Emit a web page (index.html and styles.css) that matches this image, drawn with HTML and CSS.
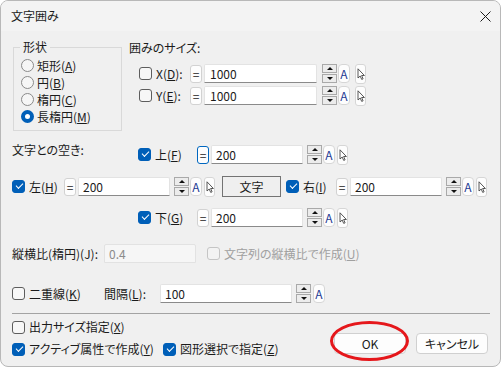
FILE: index.html
```html
<!DOCTYPE html>
<html lang="ja">
<head>
  <meta charset="UTF-8" />
  <title>文字囲み</title>
  <link rel="stylesheet" href="styles.css">
</head>
<body>
  <div class="win">
    <div class="titlebar">
      <span class="ttl">文字囲み</span>
      <svg class="close" width="11" height="11" viewBox="0 0 11 11"><path d="M0.5 0.5l10 10M10.5 0.5l-10 10" stroke="#1b1b1b" stroke-width="1"/></svg>
    </div>

    <div class="body">
      <div class="sec1">
        <fieldset class="shape">
          <legend>形状</legend>
          <div class="radio"><span class="rd"></span>矩形(<u>A</u>)</div>
          <div class="radio"><span class="rd"></span>円(<u>B</u>)</div>
          <div class="radio"><span class="rd"></span>楕円(<u>C</u>)</div>
          <div class="radio"><span class="rd on"></span>長楕円(<u>M</u>)</div>
        </fieldset>
        <div class="size">
          <div class="lbl">囲みのサイズ:</div>
          <div class="row wide r-x">
            <div class="chk c-xy"><span class="cb"></span>X(<u>D</u>):</div>
            <button class="eq">=</button>
            <input class="inp i-xy" type="text" value="1000">
            <div class="spin"><span class="up"></span><span class="dn"></span></div>
            <button class="abtn">A</button>
            <button class="cur"><svg width="8" height="12" viewBox="0 0 8 12"><path d="M1 0.8v9.2l2.2-2 1.5 3.4 1.4-0.6-1.5-3.3h2.8z" fill="#fff" stroke="#444" stroke-width="0.9"/></svg></button>
          </div>
          <div class="row wide r-y">
            <div class="chk c-xy"><span class="cb"></span>Y(<u>E</u>):</div>
            <button class="eq">=</button>
            <input class="inp i-xy" type="text" value="1000">
            <div class="spin"><span class="up"></span><span class="dn"></span></div>
            <button class="abtn">A</button>
            <button class="cur"><svg width="8" height="12" viewBox="0 0 8 12"><path d="M1 0.8v9.2l2.2-2 1.5 3.4 1.4-0.6-1.5-3.3h2.8z" fill="#fff" stroke="#444" stroke-width="0.9"/></svg></button>
          </div>
        </div>
      </div>

      <div class="row r-top">
        <span class="gaplbl">文字との空き:</span>
        <div class="chk c-tb"><span class="cb on"></span>上(<u>F</u>)</div>
        <button class="eq focus">=</button>
        <input class="inp i-tb" type="text" value="200">
        <div class="spin"><span class="up"></span><span class="dn"></span></div>
        <button class="abtn">A</button>
        <button class="cur"><svg width="8" height="12" viewBox="0 0 8 12"><path d="M1 0.8v9.2l2.2-2 1.5 3.4 1.4-0.6-1.5-3.3h2.8z" fill="#fff" stroke="#444" stroke-width="0.9"/></svg></button>
      </div>

      <div class="row r-mid">
        <div class="chk c-l"><span class="cb on"></span>左(<u>H</u>)</div>
        <button class="eq">=</button>
        <input class="inp i-lr" type="text" value="200">
        <div class="spin"><span class="up"></span><span class="dn"></span></div>
        <button class="abtn">A</button>
        <button class="cur"><svg width="8" height="12" viewBox="0 0 8 12"><path d="M1 0.8v9.2l2.2-2 1.5 3.4 1.4-0.6-1.5-3.3h2.8z" fill="#fff" stroke="#444" stroke-width="0.9"/></svg></button>
        <button class="moji">文字</button>
        <div class="chk c-r"><span class="cb on"></span>右(<u>I</u>)</div>
        <button class="eq">=</button>
        <input class="inp i-lr" type="text" value="200">
        <div class="spin"><span class="up"></span><span class="dn"></span></div>
        <button class="abtn">A</button>
        <button class="cur"><svg width="8" height="12" viewBox="0 0 8 12"><path d="M1 0.8v9.2l2.2-2 1.5 3.4 1.4-0.6-1.5-3.3h2.8z" fill="#fff" stroke="#444" stroke-width="0.9"/></svg></button>
      </div>

      <div class="row r-bot">
        <div class="chk c-tb"><span class="cb on"></span>下(<u>G</u>)</div>
        <button class="eq">=</button>
        <input class="inp i-tb" type="text" value="200">
        <div class="spin"><span class="up"></span><span class="dn"></span></div>
        <button class="abtn">A</button>
        <button class="cur"><svg width="8" height="12" viewBox="0 0 8 12"><path d="M1 0.8v9.2l2.2-2 1.5 3.4 1.4-0.6-1.5-3.3h2.8z" fill="#fff" stroke="#444" stroke-width="0.9"/></svg></button>
      </div>

      <div class="row r-ratio">
        <span class="ratiolbl">縦横比(楕円)(J):</span>
        <input class="inp i-ratio" type="text" value="0.4" disabled>
        <div class="chk off c-ratio"><span class="cb"></span>文字列の縦横比で作成(<u>U</u>)</div>
      </div>

      <div class="row r-dbl">
        <div class="chk c-dbl"><span class="cb"></span>二重線(<u>K</u>)</div>
        <span class="gap2">間隔(<u>L</u>):</span>
        <input class="inp i-dbl" type="text" value="100">
        <div class="spin"><span class="up"></span><span class="dn"></span></div>
        <button class="abtn a-dbl">A</button>
      </div>

      <div class="sep"></div>

      <div class="foot">
        <div class="opts">
          <div class="opt o-1">
            <div class="chk"><span class="cb"></span>出力サイズ指定(<u>X</u>)</div>
          </div>
          <div class="opt o-2">
            <div class="chk c-act"><span class="cb on"></span>アクティブ属性で作成(<u>Y</u>)</div>
            <div class="chk"><span class="cb on"></span>図形選択で指定(<u>Z</u>)</div>
          </div>
        </div>
        <div class="btns">
          <button class="dbtn">OK</button>
          <button class="dbtn">キャンセル</button>
        </div>
        <div class="ring"></div>
      </div>
    </div>
  </div>
</body>
</html>
```

FILE: styles.css
```css
* {
  box-sizing: border-box;
}
body {
  margin: 0;
  background: #fff;
  font-family: "Noto Sans CJK JP", "Noto Sans", sans-serif;
  font-size: 12px;
  color: #1b1b1b;
  font-feature-settings: "palt";
}
button, input {
  font: inherit;
  color: inherit;
  margin: 0;
  padding: 0;
}
u {
  text-underline-offset: 1px;
}
.win {
  width: 501px;
  height: 367px;
  border: 1px solid #b8b8b8;
  border-radius: 8px;
  overflow: hidden;
  background: #f0f0f0;
  display: flex;
  flex-direction: column;
}
.titlebar {
  height: 30px;
  flex: none;
  background: #f3f3f3;
  display: flex;
  align-items: center;
  padding-left: 10px;
}
.ttl {
  flex: 1;
  line-height: 16px;
}
.close {
  margin-right: 9px;
}
.body {
  flex: 1;
  position: relative;
  padding: 0 10px 0 11px;
}

/* shape group + size */
.sec1 {
  display: flex;
  align-items: flex-start;
  padding-top: 8px;
}
.shape {
  margin: 0 0 0 1px;
  width: 109px;
  height: 92px;
  border: 1px solid #d9d9d9;
  padding: 2px 0 0 6px;
}
.shape legend {
  padding: 0 3px;
  line-height: 16px;
}
.radio {
  display: flex;
  align-items: center;
  height: 17px;
  margin-left: 1px;
  line-height: 16px;
}
.rd {
  width: 13px;
  height: 13px;
  border-radius: 50%;
  border: 1px solid #8a8a8a;
  background: #f6f6f6;
  margin-right: 3px;
  flex: none;
}
.rd.on {
  border: 4px solid #005fb8;
  background: #fff;
}
.size {
  margin-left: 7px;
  margin-top: 1px;
}
.lbl {
  line-height: 16px;
}

/* rows */
.row {
  display: flex;
  align-items: center;
  height: 19px;
  line-height: 16px;
  white-space: nowrap;
}
.r-x {
  margin-top: 8px;
  padding-left: 10px;
}
.r-y {
  margin-top: 3px;
  padding-left: 10px;
}
.r-top {
  margin-top: 14px;
}
.r-mid {
  margin-top: 13px;
}
.r-bot {
  margin-top: 12px;
  padding-left: 126px;
}
.r-ratio {
  margin-top: 17px;
}
.r-dbl {
  margin-top: 21px;
}
.gaplbl {
  width: 126px;
  align-self: flex-start;
  margin-top: -3px;
}

.chk {
  display: flex;
  align-items: center;
  flex: none;
}
.cb {
  width: 13px;
  height: 13px;
  border: 1px solid #5d5d5d;
  border-radius: 3px;
  background: #f7f7f7;
  margin-right: 4px;
  position: relative;
  flex: none;
}
.cb.on {
  background: #005fb8;
  border-color: #005fb8;
}
.cb.on::after {
  content: "";
  position: absolute;
  left: 3px;
  top: 2px;
  width: 6px;
  height: 3px;
  border-left: 1.3px solid #fff;
  border-bottom: 1.3px solid #fff;
  transform: rotate(-45deg);
}
.chk.off {
  color: #a0a0a0;
}
.chk.off .cb {
  border-color: #c5c5c5;
  background: #f3f3f3;
}
.c-xy { width: 51px; }
.c-tb { width: 59px; }
.c-l { width: 52px; }
.c-r { width: 50px; margin-left: 5px; }
.c-dbl { width: 92px; }
.c-ratio { margin-left: 11px; }
.c-act { width: 151px; }

/* field parts */
.eq {
  width: 12px;
  height: 18px;
  background: #fdfdfd;
  border: 1px solid #d2d2d2;
  border-radius: 3px;
  line-height: 14px;
  flex: none;
}
.eq.focus {
  border-color: #0067c0;
}
.inp {
  margin-left: 2px;
  height: 19px;
  background: #fff;
  border: 1px solid #e3e3e3;
  border-bottom-color: #8a8a8a;
  border-radius: 2px 2px 0 0;
  padding: 0 4px;
  outline: none;
  flex: none;
}
.i-xy { width: 113px; padding-left: 5px; }
.i-tb { width: 92px; }
.i-lr { width: 92px; }
.i-ratio {
  width: 92px;
  margin-left: 0;
  background: #f6f6f6;
  border-color: #e2e2e2;
  color: #8c8c8c;
}
.i-dbl { width: 132px; margin-left: 0; }
.ratiolbl { width: 92px; }
.gap2 { width: 56px; }

.spin {
  width: 15px;
  height: 19px;
  margin-left: 4px;
  display: flex;
  flex-direction: column;
  justify-content: space-between;
  flex: none;
}
.spin span {
  height: 9px;
  border: 1px solid #a9a9a9;
  background: #ececec;
  position: relative;
}
.spin span::after {
  content: "";
  position: absolute;
  left: 4px;
  width: 0;
  height: 0;
  border-left: 3px solid transparent;
  border-right: 3px solid transparent;
}
.spin .up::after {
  top: 2px;
  border-bottom: 3px solid #111;
}
.spin .dn::after {
  top: 2px;
  border-top: 3px solid #111;
}
.abtn {
  width: 12px;
  height: 19px;
  margin-left: 1px;
  background: #fdfdfd;
  border: 1px solid #d6d6d6;
  border-radius: 4px;
  color: #1d3b94;
  line-height: 15px;
  flex: none;
}
.a-dbl { margin-left: 2px; }
.cur {
  width: 11px;
  height: 20px;
  margin-left: 2px;
  background: #fdfdfd;
  border: 1px solid #d6d6d6;
  border-radius: 3px;
  display: flex;
  align-items: center;
  justify-content: center;
  flex: none;
}
.wide .spin { margin-left: 5px; }
.wide .cur { margin-left: 5px; }
.moji {
  width: 59px;
  height: 21px;
  margin-left: 7px;
  background: #efefef;
  border: 1px solid #737373;
  flex: none;
}

/* bottom */
.sep {
  margin-top: 10px;
  height: 1px;
  background: #a3a3a3;
}
.foot {
  position: relative;
  display: flex;
  align-items: flex-start;
}
.opt {
  display: flex;
  align-items: center;
  height: 16px;
  line-height: 16px;
}
.o-1 { margin-top: 5px; }
.o-2 { margin-top: 6px; }
.btns {
  margin-left: auto;
  margin-right: 2px;
  margin-top: 19px;
  display: flex;
  gap: 10px;
}
.dbtn {
  width: 72px;
  height: 21px;
  background: #fdfdfd;
  border: 1px solid #d0d0d0;
  border-radius: 4px;
  line-height: 17px;
}
.ring {
  position: absolute;
  left: 318px;
  top: 7px;
  width: 79px;
  height: 40px;
  border: 3px solid #e5171b;
  border-radius: 50%;
}
```
